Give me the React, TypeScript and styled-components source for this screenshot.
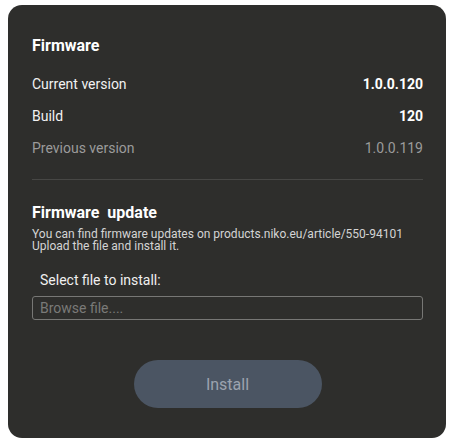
import React from "react";
import styled, { createGlobalStyle } from "styled-components";

const GlobalStyle = createGlobalStyle`
	html, body {
		margin: 0;
		padding: 0;
		background: #ffffff;
	}
	body {
		font-family: Roboto, "Liberation Sans", Arial, sans-serif;
		-webkit-font-smoothing: antialiased;
	}
`;

const infoRows = [
	{ label: "Current version", value: "1.0.0.120", muted: false },
	{ label: "Build", value: "120", muted: false },
	{ label: "Previous version", value: "1.0.0.119", muted: true },
];

export default function App() {
	return (
		<>
			<GlobalStyle />
			<Page>
				<Card>
					<Title>Firmware</Title>
					<InfoList>
						{infoRows.map((r) => (
							<InfoRow key={r.label} $muted={r.muted}>
								<span>{r.label}</span>
								<Value $muted={r.muted}>{r.value}</Value>
							</InfoRow>
						))}
					</InfoList>

					<Divider />

					<SectionTitle>Firmware&nbsp; update</SectionTitle>
					<Description>
						You can find firmware updates on products.niko.eu/article/550-94101
						<br />
						Upload the file and install it.
					</Description>

					<FieldLabel>Select file to install:</FieldLabel>
					<FileInput type="text" placeholder="Browse file...." readOnly />

					<ButtonRow>
						<InstallButton disabled>Install</InstallButton>
					</ButtonRow>
				</Card>
			</Page>
		</>
	);
}

const Page = styled.div`
	padding: 5px 7px 5px 8px;
`;

const Card = styled.div`
	box-sizing: border-box;
	width: 438px;
	height: 433px;
	background: #2e2e2c;
	border-radius: 14px;
	padding: 31px 23px 0 24px;
	display: flex;
	flex-direction: column;
`;

const Title = styled.div`
	color: #ffffff;
	font-size: 16px;
	font-weight: 700;
	line-height: 20px;
`;

const InfoList = styled.div`
	margin-top: 12px;
	display: flex;
	flex-direction: column;
`;

const InfoRow = styled.div<{ $muted: boolean }>`
	display: flex;
	justify-content: space-between;
	align-items: center;
	height: 32px;
	font-size: 14px;
	line-height: 20px;
	color: ${(p) => (p.$muted ? "#9b9b9b" : "#f2f2f2")};
`;

const Value = styled.span<{ $muted: boolean }>`
	font-weight: ${(p) => (p.$muted ? 400 : 700)};
	color: ${(p) => (p.$muted ? "#9b9b9b" : "#ffffff")};
`;

const Divider = styled.div`
	margin-top: 15px;
	height: 1px;
	background: #474745;
`;

const SectionTitle = styled.div`
	margin-top: 23px;
	color: #ffffff;
	font-size: 16px;
	font-weight: 700;
	line-height: 20px;
`;

const Description = styled.div`
	margin-top: 5px;
	color: #d4d4d4;
	font-size: 12px;
	line-height: 12px;
`;

const FieldLabel = styled.div`
	margin-top: 18px;
	padding-left: 8px;
	color: #f0f0f0;
	font-size: 14px;
	line-height: 20px;
`;

const FileInput = styled.input`
	box-sizing: border-box;
	margin-top: 6px;
	width: 100%;
	height: 24px;
	padding: 0 7px;
	border: 1px solid #777775;
	border-radius: 3px;
	background: transparent;
	color: #e0e0e0;
	font-family: inherit;
	font-size: 14px;
	outline: none;

	&::placeholder {
		color: #7a7a78;
	}
`;

const ButtonRow = styled.div`
	margin-top: 40px;
	display: flex;
	justify-content: center;
`;

const InstallButton = styled.button`
	width: 188px;
	height: 48px;
	border: none;
	border-radius: 24px;
	background: #4b5563;
	color: #9ca3af;
	font-family: inherit;
	font-size: 16px;
	cursor: default;
`;
